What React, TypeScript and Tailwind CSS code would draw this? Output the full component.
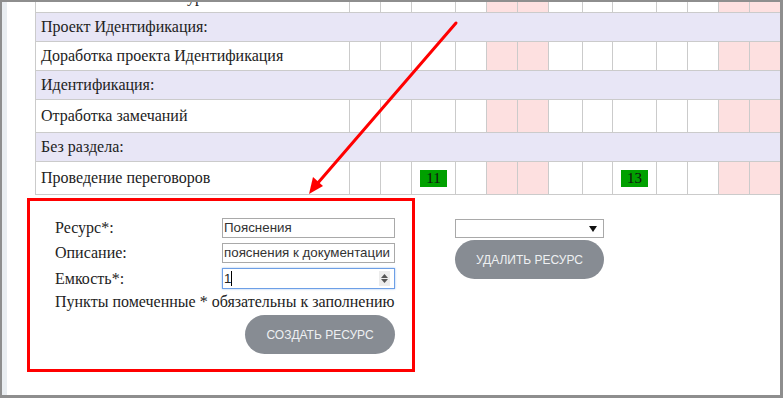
const serif = "font-['Liberation_Serif','Times_New_Roman',serif]";
const sans = "font-['Liberation_Sans',Arial,sans-serif]";

// day columns: label, width, weekend
const days = [
    { d: "22", w: 31, off: false },
    { d: "23", w: 31, off: false },
    { d: "24", w: 44, off: false },
    { d: "25", w: 31, off: false },
    { d: "26", w: 31, off: true },
    { d: "27", w: 31, off: true },
    { d: "28", w: 34, off: false },
    { d: "29", w: 30, off: false },
    { d: "30", w: 44, off: false },
    { d: "31", w: 31, off: false },
    { d: "1", w: 31, off: false },
    { d: "2", w: 31, off: true },
    { d: "3", w: 31, off: true },
    { d: "4", w: 31, off: false },
];

type Row =
    | { kind: "section"; title: string }
    | { kind: "task"; title: string; h: number; marks?: Record<number, string> };

const rows: Row[] = [
    { kind: "section", title: "Проект Идентификация:" },
    { kind: "task", title: "Доработка проекта Идентификация", h: 29 },
    { kind: "section", title: "Идентификация:" },
    { kind: "task", title: "Отработка замечаний", h: 33 },
    { kind: "section", title: "Без раздела:" },
    { kind: "task", title: "Проведение переговоров", h: 33, marks: { 2: "11", 8: "13" } },
];

function Cells({ h, marks }: { h: number; marks?: Record<number, string> }) {
    return (
        <>
            {days.map((c, i) => (
                <div
                    key={c.d}
                    style={{ width: c.w, height: h }}
                    className={`shrink-0 border-l border-[#cbcbcb] flex items-center justify-center ${
                        c.off ? "bg-[#fde0e0]" : "bg-white"
                    }`}
                >
                    {marks?.[i] && (
                        <span className={`${serif} bg-[#00a000] text-[#111] text-[15px] leading-[17px] w-[27px] h-[17px] flex items-center justify-center`}>
                            {marks[i]}
                        </span>
                    )}
                </div>
            ))}
        </>
    );
}

function Table() {
    return (
        <div className={`ml-[28px] mt-[-20px] w-[800px] ${serif} text-[16px] text-[#222]`}>
            <div className="flex border-b border-[#cbcbcb]">
                <div className="w-[314px] h-[30px] shrink-0 border-l border-[#cbcbcb] flex items-center justify-center">
                    Ресурсы
                </div>
                {days.map((c) => (
                    <div
                        key={c.d}
                        style={{ width: c.w }}
                        className={`h-[30px] shrink-0 border-l border-[#cbcbcb] flex items-center justify-center ${
                            c.off ? "bg-[#fde0e0]" : "bg-white"
                        }`}
                    >
                        {c.d}
                    </div>
                ))}
            </div>
            {rows.map((r) =>
                r.kind === "section" ? (
                    <div
                        key={r.title}
                        className="h-[29px] border-l border-b border-[#cbcbcb] bg-[#e8e6f6] flex items-center pl-[5px]"
                    >
                        {r.title}
                    </div>
                ) : (
                    <div key={r.title} className="flex border-b border-[#cbcbcb]">
                        <div
                            style={{ height: r.h - 1 }}
                            className="w-[314px] shrink-0 border-l border-[#cbcbcb] flex items-center pl-[5px]"
                        >
                            {r.title}
                        </div>
                        <Cells h={r.h - 1} marks={r.marks} />
                    </div>
                )
            )}
        </div>
    );
}

function TextBox({ value }: { value: string }) {
    return (
        <div className={`w-[173px] h-[20px] border border-[#a9a9a9] ${sans} text-[13.33px] text-[#333] pl-[1px] flex items-center whitespace-nowrap overflow-hidden`}>
            {value}
        </div>
    );
}

function ResourceForm() {
    const label = "w-[167px] shrink-0";
    return (
        <div className="w-[388px] h-[174px] border-[3px] border-[#ff0000] pt-[17px] pl-[25px]">
            <div className={`w-[340px] ${serif} text-[16px] text-[#222] flex flex-col`}>
                <div className="flex items-center h-[20px]">
                    <span className={label}>Ресурс*:</span>
                    <TextBox value="Пояснения" />
                </div>
                <div className="flex items-center h-[20px] mt-[5px]">
                    <span className={label}>Описание:</span>
                    <TextBox value="пояснения к документации" />
                </div>
                <div className="flex items-center h-[21px] mt-[5px]">
                    <span className={label}>Емкость*:</span>
                    <div className="w-[173px] h-[21px] border border-[#6d9fe6] shadow-[0_0_2px_#9fc1f0] flex items-center pl-[1px] pr-[4px]">
                        <span className={`${sans} text-[13.33px] text-[#222]`}>1</span>
                        <span className="w-px h-[15px] bg-black" />
                        <div className="ml-auto w-[11px] h-[15px] bg-[#ececec] flex flex-col items-center justify-center gap-[1px]">
                            <svg width="7" height="4" viewBox="0 0 7 4">
                                <path d="M0 4 L3.5 0 L7 4 Z" fill="#555" />
                            </svg>
                            <svg width="7" height="4" viewBox="0 0 7 4">
                                <path d="M0 0 L3.5 4 L7 0 Z" fill="#555" />
                            </svg>
                        </div>
                    </div>
                </div>
                <p className="mt-[4px] leading-[18px] whitespace-nowrap">
                    Пункты помеченные * обязательны к заполнению
                </p>
                <button className={`self-end mt-[4px] w-[150px] h-[39px] rounded-full bg-[#878c93] text-[#eef0f2] text-[12px] ${sans}`}>
                    СОЗДАТЬ РЕСУРС
                </button>
            </div>
        </div>
    );
}

function DeletePanel() {
    return (
        <div className="ml-[40px] mt-[21px] w-[149px] flex flex-col">
            <div className="h-[19px] border border-[#a9a9a9] flex items-center justify-end pr-[6px]">
                <svg width="8" height="6" viewBox="0 0 8 6">
                    <path d="M0 0 L8 0 L4 6 Z" fill="#111" />
                </svg>
            </div>
            <button className={`mt-[2px] h-[39px] rounded-full bg-[#878c93] text-[#eef0f2] text-[12px] ${sans}`}>
                УДАЛИТЬ РЕСУРС
            </button>
        </div>
    );
}

export default function App() {
    return (
        <div className="w-[783px] h-[398px] flex bg-white border-t-2 border-l-2 border-r-[3px] border-b-[3px] border-[#8e8e8e] overflow-hidden">
            <div className="w-[5px] shrink-0 bg-[#e9edf1]" />
            <div className="relative flex-1 overflow-hidden">
                <Table />
                <div className="flex items-start ml-[20px] mt-[3px]">
                    <ResourceForm />
                    <DeletePanel />
                </div>
                {/* annotation arrow */}
                <svg
                    className="absolute left-0 top-0 pointer-events-none"
                    width="776"
                    height="395"
                >
                    <line x1="449" y1="21" x2="310" y2="182" stroke="#ff0000" strokeWidth="3" strokeLinecap="round" />
                    <path d="M302 192 L306 175 L316 184 Z" fill="#ff0000" />
                </svg>
            </div>
        </div>
    );
}
